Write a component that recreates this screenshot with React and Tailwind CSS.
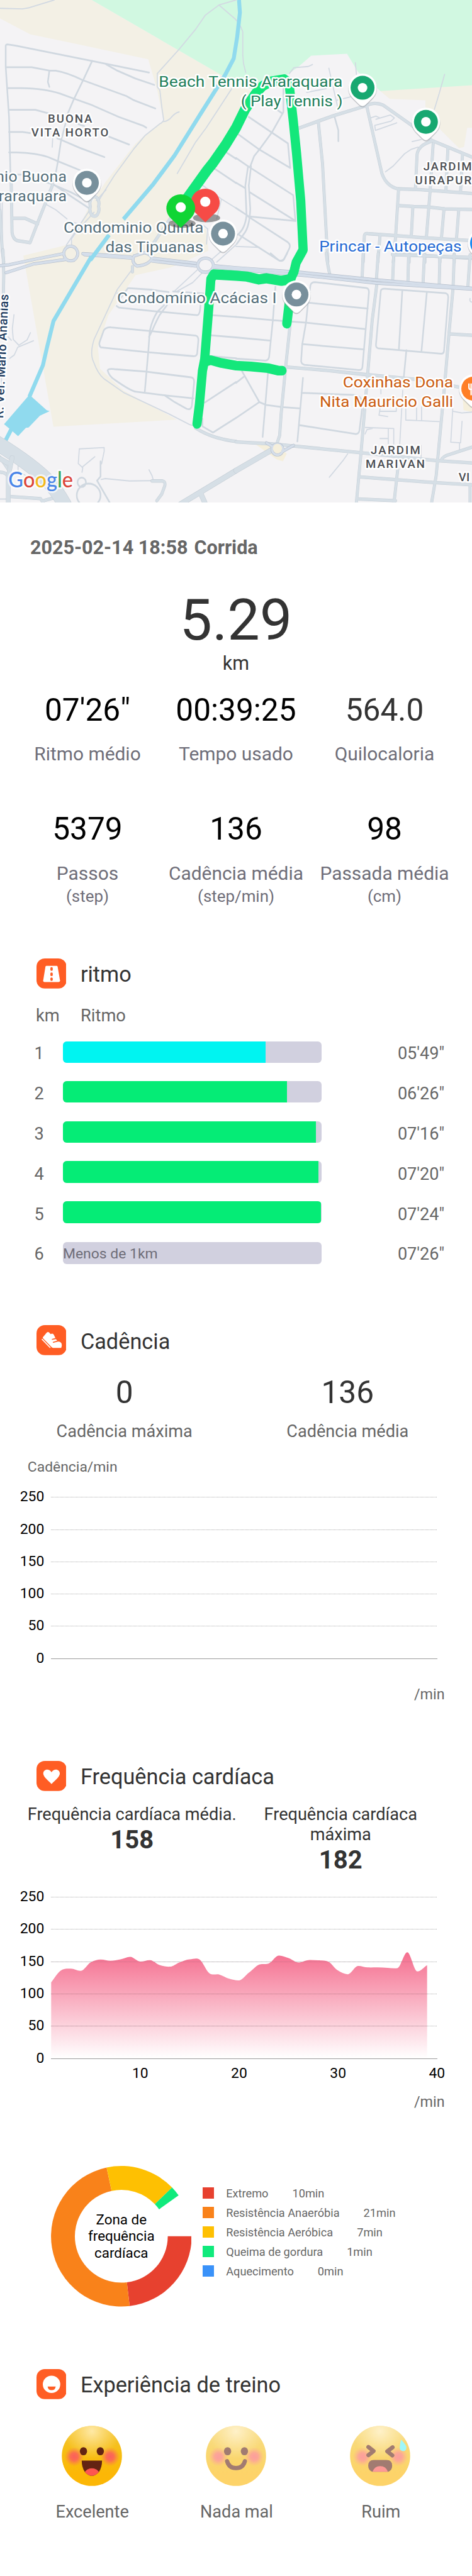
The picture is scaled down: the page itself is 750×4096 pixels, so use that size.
import React from "react";

/* ---------- map ---------- */

const TILES = [
  {
    x: 0,
    y: 0,
    thin: [
      "M0 50 L150 53 L195 46 L360 0",
      "M1045 440 L1190 295 L1300 175 L1365 90 L1455 30 L1568 0",
      "M1455 30 L1568 118",
      "M1045 440 V520 L1062 540 L1075 640 L1087 715 Q1087 730 1060 742 L965 810 L890 890 L760 1050 L690 1150 L650 1210",
      "M1087 728 Q1120 722 1140 700 Q1165 675 1190 670",
      "M1540 530 L1370 765 L1300 850 L1178 1038",
      "M350 830 L347 880",
      "M300 1220 L370 1255 L445 1310",
      "M705 1135 L640 1200 M590 1265 L440 1468 M625 1270 L510 1385 L475 1430 V1470",
      "M470 1325 L520 1340",
      "M0 1180 L8 1400 M15 1200 V1420",
      "M1340 1105 L1470 1190 L1568 1245 M1470 1195 L1440 1310 M1340 1340 L1380 1370 L1372 1460",
      "M1568 1465 L1440 1568 M1500 1480 L1410 1550",
    ],
    minor: [
      "M70 1060 L60 700 L38 400 V275 Q38 266 50 266 L100 272 L610 365 L990 434",
      "M705 385 L780 423 L900 470 L1025 508",
      "M40 402 H210 L330 423 H370 Q450 435 550 480 L840 575 L890 600 L1032 649",
      "M328 423 L318 490 L328 520",
      "M50 527 H140 Q300 530 400 560 L490 590 L600 625 L790 700 L950 752 L972 764",
      "M60 657 H235 L320 678 M520 742 L560 755",
      "M60 790 H150 L200 796 M725 818 L858 865",
      "M60 912 H110 Q240 915 320 940 L385 965 L530 1018",
      "M380 828 L410 838 L530 885 L694 940",
      "M612 365 L555 475 L490 595 L450 680 M435 740 L405 845 L385 965 L368 1050 L345 1110",
      "M70 1045 H150 L340 1100 L470 1150 L595 1210 M350 1100 L480 1180 L590 1245",
      "M1500 910 L1568 950 M1430 1012 L1568 1095",
    ],
    medium: [
      "M74 1060 L80 1390 Q85 1430 115 1440 L200 1452 L245 1345 L300 1220 L350 1105",
      "M85 1306 H165 L250 1340",
      "M0 1260 L15 1500 L25 1568",
      "M655 1235 A30 42 0 1 1 600 1235 A30 42 0 1 1 655 1235",
      "M1130 1310 L1020 1455",
    ],
    major: [],
  },
  {
    x: 1568,
    y: 0,
    thin: [
      "M0 120 Q20 130 45 190 V330 L50 380 L65 435",
      "M355 440 L385 405 L480 398 L508 386",
      "M793 375 L800 445 M617 408 L640 500 L675 640",
      "M470 553 L600 530 M670 600 L760 580",
      "M1386 445 L1350 560 L1318 655",
      "M895 705 L930 695 L955 706 M930 714 L1025 688 L1052 706 L1030 725 L922 750 L926 780 L1068 735",
      "M993 1028 L1045 993 L1120 920 L1165 893 L1210 880",
      "M1170 847 L1230 835",
      "M0 1475 L155 1480",
    ],
    minor: [
      "M315 530 V670 L238 793 L155 895 L120 935 L95 995 M270 655 L310 680",
      "M85 700 L238 793 L345 858 L360 1005 L155 895 L10 800",
      "M0 945 L80 995 L380 1168 L395 1322 L85 1295 L0 1245",
      "M0 1093 L60 1125 M90 1150 L395 1322",
      "M80 995 L62 1110 L70 1290 Q60 1370 10 1405 M100 995 L85 1110 L95 1250 Q90 1350 60 1390 L5 1460",
      "M80 1295 L345 1450 Q365 1465 355 1485 L320 1550 Q300 1568 280 1555 L20 1405",
      "M655 700 L680 780 V845",
    ],
    medium: [
      "M415 768 L550 724 L650 692 L860 634 Q920 605 980 630 L1160 745 L1300 840 L1568 940",
      "M547 730 L575 980 L600 1400 L610 1568",
      "M870 640 L970 1040 Q1000 1115 1075 1130 L1230 1135 L1568 1158",
      "M1300 845 Q1210 870 1203 925 L1192 1130",
      "M1310 860 L1290 1140 L1265 1420 M1408 885 L1395 1140 M1505 925 L1492 1145",
      "M1080 1135 L1060 1420 L1045 1568",
      "M1080 1230 L1180 1236 L1270 1238 L1385 1250 L1568 1254",
      "M1175 1240 L1165 1410 M1382 1250 L1365 1425 M1480 1255 L1465 1430",
      "M845 1568 L853 1410 Q855 1395 875 1398 L1060 1410 L1270 1424 L1568 1440",
      "M957 1410 L942 1568 M1150 1520 V1568 M1255 1520 V1568 M1355 1520 V1568 M1450 1520 V1568",
      "M1040 1520 L1568 1545",
    ],
    major: [],
  },
  {
    x: 0,
    y: 1516,
    thin: [
      "M875 100 L780 215 L625 515 Q595 600 622 650 Q650 720 690 750 L825 835 L1120 960 L1260 1025 L1300 1035",
      "M93 367 L82 450 L88 515 L125 550 L180 518 L202 475 M55 500 L75 520 M222 523 L118 562 L95 608 L65 628",
      "M1310 100 L1160 225 M1345 115 L1280 175 L1180 225",
      "M545 1310 L550 1283 L520 1258 L527 1170 L692 1162 V1185 L675 1260 M545 1280 L630 1217",
      "M672 1353 L700 1348 L860 1362 L1015 1360 M990 1295 L1010 1330 L1020 1360",
      "M0 1470 H40 M120 1260 V1300 L170 1330 M10 740 V800",
    ],
    minor: [
      "M800 270 L850 208 L1000 217 L1120 232",
      "M775 315 L790 325 L1045 348 L1310 370 Q1330 368 1332 310",
      "M1090 310 L1045 350 Q1010 400 995 465 L985 590 L962 828 M1110 310 L1060 370 Q1030 420 1010 465 L990 500",
      "M700 450 Q720 440 740 443 L1000 465 L1300 492 Q1318 495 1318 520 L1310 600 Q1305 618 1280 615 L985 592 L670 563 Q655 550 662 530 L690 460 Z",
      "M720 695 Q730 690 760 693 L970 708 L1270 742 Q1290 745 1290 770 L1275 910 Q1270 940 1240 930 L1160 890 L1095 850",
      "M715 700 Q725 735 760 755 Q870 825 905 828 L1095 850 L1285 868",
      "M1405 370 L1568 380 M1400 490 L1568 503 M1390 615 L1568 628",
      "M1360 893 L1568 770 M1345 990 V1035 L1415 1072 L1568 985",
      "M668 1245 V1335 L645 1360 L728 1490",
      "M515 1370 A28 28 0 1 1 571 1370 A28 28 0 1 1 515 1370",
      "M510 1448 A79 70 0 1 1 668 1448 A79 70 0 1 1 510 1448",
      "M780 240 L830 232 M1150 228 L1350 240",
    ],
    medium: [
      "M1300 1045 Q1410 1110 1568 1125",
      "M1010 1362 H1080 Q1100 1365 1095 1390 L1075 1440 L1042 1480",
      "M20 -20 L25 130 L22 250",
      "M0 1310 Q50 1310 60 1350 M0 1220 L60 1300",
      "M60 1455 L270 1468 L285 1490 M290 1480 L360 1462",
      "M880 80 V110",
    ],
    major: ["M1200 1500 L1330 1430 L1568 1300 M1330 1430 L1360 1490"],
  },
  {
    x: 1568,
    y: 1516,
    thin: [
      "M742 1200 L715 1235 L620 1340",
      "M963 815 V840 M957 945 H1065 V925 M957 930 L950 968 L1008 977",
      "M1128 925 V998 L1200 1000 L1350 1007 M1200 925 V1000 M1233 920 V1000",
      "M860 1042 L1048 1048 V1140 M1012 1050 V1140 M957 1108 H1010 M858 1080 L870 1055 L905 1048",
      "M1440 930 L1427 1130 L1492 1134 L1502 1005 M1485 1135 V1180 M1440 945 L1500 955 L1568 950",
      "M1230 1150 V1220 M1555 270 Q1550 290 1568 292",
      "M1108 820 L1088 1140",
    ],
    minor: [
      "M230 0 L285 42 Q300 50 315 40 L340 0",
      "M0 380 L245 400 L470 415 L855 453 M0 503 L230 522 M0 630 L195 642 Q215 640 220 620 L245 400 L262 200",
      "M495 190 Q500 172 525 172 L865 207 Q885 210 883 235 L840 680 Q838 700 815 698 L455 667 Q430 660 433 640 L440 545 L465 415 L478 300 Z",
      "M475 295 L875 330 M440 543 L850 575",
      "M962 225 Q965 210 990 212 L1390 238 Q1412 242 1410 265 L1382 585 Q1380 602 1360 600 L945 568 Q928 565 930 545 Z",
      "M1105 220 L1082 578 M1268 232 L1232 588",
      "M1132 580 L1115 740",
      "M445 745 L408 1125 M435 835 L780 847 Q840 850 835 900",
      "M838 930 L820 1060 Q815 1085 790 1080 L420 1028",
      "M40 705 L155 890 L200 907 L310 920 L425 928 M0 985 L155 890 M0 775 L50 740",
      "M213 710 L177 1098",
    ],
    medium: [
      "M358 440 L330 680 L300 960 L290 1090 L275 1130",
      "M335 680 L600 700 L870 726 L1200 755 L1480 800",
      "M935 190 L905 400 L875 720 L845 1040 L830 1200 L800 1490",
      "M1442 210 L1415 480 L1385 800 L1360 1040 L1330 1330 L1300 1490",
      "M0 1128 L230 1140 L350 1150 L830 1193 L1330 1240 L1568 1254",
      "M1075 1290 L1050 1490 M825 1338 L1320 1372 L1568 1385 M1555 1385 V1490 M810 1470 L1060 1480",
      "M1365 1235 Q1370 1215 1430 1200 L1568 1160",
      "M600 0 Q605 60 628 145 M845 0 L838 150 M945 0 L932 170 M1048 10 L1040 180 M1147 10 L1142 180 M1252 10 L1242 190 M1355 10 L1350 195 M1450 10 L1442 210 M1555 10 L1540 210",
      "M1415 482 L1568 490",
      "M1040 8 L1568 25",
    ],
    major: ["M0 1300 L240 1175"],
  },
];

const HIGHWAYS = [
  "M0 1590 L60 1584 L240 1550 L420 1518 M40 1632 L220 1580 L440 1552",
  "M550 1518 L700 1526 L870 1538 M560 1524 L880 1545",
  "M1010 1545 L1300 1575 M1010 1562 L1300 1592",
  "M1420 1590 L1568 1602 L2000 1630 L2500 1675 L3136 1725",
  "M1425 1600 L1568 1612 L2000 1646 L2500 1694 L3136 1730",
  "M470 1473 A46 44 0 1 0 470.1 1473",
  "M890 1532 L960 1512 Q1000 1520 1010 1545 Q990 1585 910 1592 Q870 1570 890 1532",
  "M1365 1545 A52 42 0 1 0 1366 1545",
  "M1843 2658 A36 32 0 1 0 1844 2658",
  "M1770 2650 L1815 2675 M1950 2665 L1870 2705",
];

function Roads({ paths, edge, core, outer, inner }) {
  return (
    <>
      {paths.map((d, i) => (
        <path key={"o" + i} d={d} stroke={edge} strokeWidth={outer} />
      ))}
      {paths.map((d, i) => (
        <path key={"i" + i} d={d} stroke={core} strokeWidth={inner} />
      ))}
    </>
  );
}

function Pin({ x, y, color, children }) {
  return (
    <g transform={`translate(${x} ${y})`}>
      <path
        d="M0 43 Q-4 43 -8 39 L-24 23 A33 33 0 1 1 24 23 L8 39 Q4 43 0 43Z"
        fill="#8a8f94"
        opacity=".45"
        transform="translate(0 2)"
      />
      <path d="M0 42 Q-4 42 -8 38 L-24 22 A32.5 32.5 0 1 1 24 22 L8 38 Q4 42 0 42Z" fill="#fff" />
      <circle r="27.4" fill={color} />
      {children || <circle r="11" fill="#fff" />}
    </g>
  );
}

function Flag({ x, y, color }) {
  return (
    <g transform={`translate(${x} ${y})`}>
      <ellipse cx="3" cy="34" rx="31" ry="10" fill="#4b4b4b" opacity=".55" />
      <path d="M0 44 L-22 23 A33 32 0 1 1 22 23Z" fill={color} />
      <circle cy="-3" r="11.6" fill="#fff" />
    </g>
  );
}

const LABELS = [
  { t: "Beach Tennis Araraquara", x: 363.3, y: 198.2, w: 420.5, c: "#1f7f5c" },
  { t: "( Play Tennis )", x: 551, y: 243.4, w: 233, c: "#1f7f5c" },
  { t: "Condominio Quinta", x: 145.3, y: 532.7, w: 320.3, c: "#546e7a" },
  { t: "das Tipuanas", x: 241, y: 577.9, w: 224.6, c: "#546e7a" },
  { t: "Condomínio Acácias I", x: 267.9, y: 693.7, w: 365, c: "#546e7a" },
  { t: "Princar - Autopeças", x: 730.4, y: 576.7, w: 326, c: "#2469d4" },
  { t: "Coxinhas Dona", x: 784.5, y: 887.3, w: 252.5, c: "#cb5c10" },
  { t: "Nita Mauricio Galli", x: 731.5, y: 932.5, w: 305.5, c: "#cb5c10" },
];

const AREAS = [
  { t: "BUONA", x: 109.5, y: 281.3, w: 101.2 },
  { t: "VITA HORTO", x: 71.6, y: 312.7, w: 176.4 },
  { t: "JARDIM", x: 968.7, y: 390.4, w: 110.8 },
  { t: "UIRAPUR", x: 949.8, y: 421.7, w: 129 },
  { t: "JARDIM", x: 848.2, y: 1040, w: 113.6 },
  { t: "MARIVAN", x: 836.8, y: 1072, w: 135.2 },
  { t: "VI", x: 1049.6, y: 1101.6, w: 25 },
];

function RunMap() {
  return (
    <div className="relative h-[798.5px] w-full overflow-hidden bg-[#f4f3f5]">
      <svg
        className="block h-full w-full"
        viewBox="0 0 3136 3005"
        preserveAspectRatio="none"
        fill="none"
        strokeLinecap="round"
        strokeLinejoin="round"
      >
        <path
          fill="#f3f0e5"
          d="M0 0 H610 L1568 500 L1700 560 L1568 760 L1180 1330 L1370 1370 L1385 1500 L1250 1556 L1130 1601 L900 1646 L720 1886 L650 2076 L665 2206 L820 2336 L940 2396 L1175 2511 L355 2553 L155 1530 L470 1460 L590 1240 L700 1090 L900 860 L960 810 L1085 720 L1045 540 L985 355 L500 262 L200 205 L0 110Z"
        />
        <path fill="#f3f0e5" d="M2520 540 L3136 500 V765 H3104 L3083 880 L3050 886 L2930 780 L2826 640 V600 L2590 592Z" />
        <path fill="#d1f8e1" d="M610 0 H3136 V510 L2528 545 L2378 430 L2306 322 L2068 333 L1988 395 L1920 440 L1700 545 L1568 500Z" />
        <path fill="#f5efdc" d="M1700 2660 H1840 L1905 2715 L1880 2760 L1840 2750Z M3075 2390 L3136 2380 V2465 L3080 2455Z" />

        {TILES.map((t, i) => (
          <g key={i} transform={`translate(${t.x} ${t.y})`}>
            {t.thin.map((d, k) => (
              <path key={k} d={d} stroke="#d2d9e2" strokeWidth="7" />
            ))}
            {t.minor.map((d, k) => (
              <path key={k} d={d} stroke="#d0d8e0" strokeWidth="10.5" />
            ))}
          </g>
        ))}
        {TILES.map((t, i) => (
          <g key={i} transform={`translate(${t.x} ${t.y})`}>
            <Roads paths={t.medium} edge="#c5ced6" core="#d6dfe6" outer={20} inner={16} />
            <Roads paths={t.major} edge="#c5ced6" core="#d6dfe6" outer={34} inner={29} />
          </g>
        ))}
        <Roads paths={HIGHWAYS} edge="#b4bdca" core="#d5deea" outer={19} inner={14} />
        <path d="M1843 2656 A30 28 0 1 0 1844 2656" fill="#f5efdc" />

        <g stroke="#90daee" strokeWidth="26" strokeLinecap="butt">
          <path d="M1588 0 L1594 75 L1576 220 L1553 350 L1495 450 L1330 685 L1160 930 L1020 1100 L820 1312 M725 1405 L600 1556" />
          <path d="M608 1535 L500 1700 L355 1922 L312 2080 L285 2186 L195 2375 M80 2560 L40 2630 L-10 2710" />
        </g>
        <path
          fill="#90daee"
          d="M188 2370 H205 L310 2455 L330 2460 L265 2488 L190 2558 L172 2560 L120 2610 L82 2580 L27 2538Z"
        />

        <path d="M-40 2640 Q230 2790 330 2890 Q380 2940 430 3020" stroke="#c5ced6" strokeWidth="92" />
        <path d="M-40 2640 Q230 2790 330 2890 Q380 2940 430 3020" stroke="#d6dfe6" strokeWidth="87" />
        <path d="M-10 2740 L50 2770 M80 2740 L55 2850 V3020" stroke="#c5ced6" strokeWidth="31" />
        <path d="M-10 2740 L50 2770 M80 2740 L55 2850 V3020" stroke="#d6dfe6" strokeWidth="27" />

        <g stroke="#14e77b" strokeWidth="61">
          <path
            strokeWidth="66"
            d="M1220 1215 L1375 1020 L1415 975 L1500 865 L1568 765 L1628 655 L1700 560"
          />
          <path d="M1690 570 L1745 515 L1800 488 L1888 475 L1920 495 L1948 720 L1970 915 L1998 1200 L2014 1495 L1968 1570 L1953 1626 L1930 1670 L1870 1680 L1770 1665 L1720 1672 L1640 1655 L1568 1650 L1420 1642 L1401 1670 L1388 1830 L1360 2150 L1345 2220 L1325 2420 L1309 2535" />
          <path strokeWidth="58" d="M1362 2165 L1400 2155 L1470 2172 L1568 2188 L1668 2193 L1780 2203 L1850 2218 L1875 2218" />
          <path strokeWidth="62" d="M1932 1670 L1925 1790 L1917 1850 L1906 1935" />
        </g>
      </svg>

      <svg className="absolute inset-0 h-full w-full font-['Roboto',sans-serif]" viewBox="0 0 1080 1150" fill="none">
        <Pin x={198.7} y={418.7} color="#78909c" />
        <Pin x={510.3} y={535} color="#78909c" />
        <Pin x={829.6} y={201} color="#18a871" />
        <Pin x={974.6} y={279} color="#18a871" />
        <Pin x={1103} y={557} color="#1b8cf0" />
        <g stroke="#fff" strokeWidth="7" strokeLinejoin="round" paintOrder="stroke" fontSize="35.6">
          {LABELS.map((l) => (
            <text
              key={l.t}
              x={l.x}
              y={l.y}
              textLength={l.w}
              lengthAdjust="spacingAndGlyphs"
              fill={l.c}
              style={{ paintOrder: "stroke" }}
            >
              {l.t}
            </text>
          ))}
          <text x="153" y="416" textAnchor="end" fill="#546e7a" letterSpacing=".5" style={{ paintOrder: "stroke" }}>
            nio Buona
          </text>
          <text x="153" y="461" textAnchor="end" fill="#546e7a" letterSpacing=".5" style={{ paintOrder: "stroke" }}>
            raraquara
          </text>
          <g fontSize="26.8" fontWeight="500" fill="#4b4e53">
            {AREAS.map((l, i) => (
              <text key={i} x={l.x} y={l.y} textLength={l.w} style={{ paintOrder: "stroke" }}>
                {l.t}
              </text>
            ))}
          </g>
          <text
            transform="translate(7 958) rotate(-87.5)"
            textLength="284"
            fontSize="28.5"
            fontWeight="500"
            fill="#1c3a5e"
            style={{ paintOrder: "stroke" }}
          >
            R. Ver. Mario Ananias
          </text>
        </g>
        <Pin x={678.4} y={674.5} color="#78909c" />
        <Pin x={1083} y={890} color="#ff7f27">
          <path d="M-10 -12 V-3 Q-10 2 -5 2 Q0 2 0 -3 V-12 M-5 -12 V15 M9 15 V-13 Q3 -8 4 2 H9" stroke="#fff" strokeWidth="3.2" />
        </Pin>
        <Flag x={469.7} y={465} color="#f64b46" />
        <Flag x={413.6} y={477.7} color="#10d535" />
        <text
          x="19"
          y="1115.8"
          textLength="148"
          lengthAdjust="spacingAndGlyphs"
          fontSize="49"
          fontWeight="500"
          className="font-['Lato',sans-serif]"
          stroke="#fff"
          strokeOpacity=".7"
          strokeWidth="8"
          strokeLinejoin="round"
          style={{ paintOrder: "stroke" }}
        >
          <tspan fill="#4a86e8">G</tspan>
          <tspan fill="#db4539">o</tspan>
          <tspan fill="#f4b81c">o</tspan>
          <tspan fill="#4a86e8">g</tspan>
          <tspan fill="#3aa557">l</tspan>
          <tspan fill="#db4539">e</tspan>
        </text>
      </svg>
    </div>
  );
}

/* ---------- section header ---------- */

function RoadIcon() {
  return (
    <>
      <path d="M23 17 H46 Q48 17 48.5 19 L54 51 Q54 54 51 54 H18 Q15 54 15.3 51 L20.5 19 Q21 17 23 17Z" fill="#fff" />
      <g fill="#ff5d24">
        <rect x="31.8" y="20" width="5.5" height="8.5" rx="2.7" />
        <rect x="31.8" y="32" width="5.5" height="8.5" rx="2.7" />
        <rect x="31.8" y="43.5" width="5.5" height="8" rx="2.7" />
      </g>
    </>
  );
}

function ShoeIcon() {
  return (
    <g transform="translate(-13 -12) scale(.3333)" fill="#fff">
      <path d="M83 119 L110 87 Q117 80 125 86 L136 98 L147 94 Q154 94 158 102 L169 125 L146 131 Q142 134 146 138 L173 132 L181 143 L154 151 Q149 154 153 158 L186 150 Q205 147 212 165 Q216 180 209 193 H153 Q147 193 143 188 L84 127 Q81 123 83 119Z" />
      <path d="M78 134 L132 190" stroke="#fff" strokeWidth="7" strokeLinecap="round" />
    </g>
  );
}

function HeartIcon() {
  return (
    <path
      d="M34.5 53 C28 46 15.5 37 15.5 29 C15.5 19 28.5 16 34.5 26 C40.5 16 53.5 19 53.5 29 C53.5 37 41 46 34.5 53Z"
      fill="#fff"
    />
  );
}

function SmileIcon() {
  return (
    <>
      <circle cx="34.5" cy="35" r="20" fill="#fff" />
      <path d="M25.5 40 H44 Q43 48.5 34.7 48.5 Q26.5 48.5 25.5 40Z" fill="#ff5d24" />
    </>
  );
}

function Header({ icon, title }) {
  return (
    <div className="flex h-[47.8px] items-center pl-[57.6px]">
      <svg className="h-[47.8px] w-[47.8px] shrink-0" viewBox="0 0 69 69" fill="none">
        <rect width="69" height="69" rx="19" fill="#ff5d24" />
        {icon}
      </svg>
      <h2 className="ml-[22.5px] pt-[3px] text-[34.3px] leading-[40px] text-[#333]">{title}</h2>
    </div>
  );
}

/* ---------- summary ---------- */

function StatRow({ items }) {
  return (
    <div className="grid grid-cols-3 px-[21px] text-center">
      {items.map((s) => (
        <div key={s.label} className="flex flex-col whitespace-nowrap">
          <span className={s.dim ? "text-[49.6px] leading-[60px] text-[#333]" : "text-[49.6px] leading-[60px] text-black"}>
            {s.value}
          </span>
          <span className="mt-[20.5px] text-[29.9px] leading-[40px] text-[#6f6e79]">{s.label}</span>
          {s.unit && <span className="text-[25.9px] leading-[32px] text-[#6f6e79]">{s.unit}</span>}
        </div>
      ))}
    </div>
  );
}

/* ---------- pace ---------- */

const PACES = [
  { n: 1, time: "05'49\"", w: 78.4, fill: "bg-[#00f4f1]", pad: "mb-[2.6px]" },
  { n: 2, time: "06'26\"", w: 86.6, fill: "bg-[#05ec76]", pad: "mb-[5px]" },
  { n: 3, time: "07'16\"", w: 97.8, fill: "bg-[#05ec76]", pad: "mb-[5px]" },
  { n: 4, time: "07'20\"", w: 98.7, fill: "bg-[#05ec76]", pad: "mb-[5px]" },
  { n: 5, time: "07'24\"", w: 99.6, fill: "bg-[#05ec76]", pad: "mb-[5px]" },
  { n: 6, time: "07'26\"", w: 0, fill: "bg-[#05ec76]", pad: "mb-[2.6px]", note: "Menos de 1km" },
];

function PaceRow({ p }) {
  return (
    <div className="flex h-[63.9px] items-center pl-[54.4px] pr-[43.8px] text-[27.1px] text-[#666]">
      <span className="w-[45.6px] pt-[1px] leading-[32px]">{p.n}</span>
      <div className={`flex h-[34.4px] w-[411.3px] items-center overflow-hidden rounded-[6px] bg-[#d1d0df] ${p.pad}`}>
        <div className={`h-full ${p.fill}`} style={{ width: p.w + "%" }} />
        {p.note && <span className="pt-[2px] text-[22.9px] leading-[32px] text-[#6e6d78]">{p.note}</span>}
      </div>
      <span className="ml-auto pt-[1px] leading-[32px]">{p.time}</span>
    </div>
  );
}

/* ---------- charts ---------- */

const HEART = [
  117.5, 136, 138.6, 135.2, 148.5, 152.7, 150.8, 153, 156.9, 149.6, 151.9, 144, 141.7, 148.5, 153, 152.7, 131.4, 129.5,
  123, 120.4, 132.5, 144.7, 146.6, 158.8, 155, 148.1, 151.9, 151.5, 149.6, 135.6, 129.9, 142.8, 140.5, 140.5, 139.8,
  139.4, 164, 134.4, 143.9,
];

function areaPath(values, left, step, base, unit) {
  const pts = values.map((v, i) => [left + i * step, base - v * unit]);
  const slope = pts.map((p, i) => {
    const a = pts[i - 1];
    const b = pts[i + 1];
    if (!a || !b) return null;
    const s0 = p[1] - a[1];
    const s1 = b[1] - p[1];
    return s0 * s1 <= 0 ? (s0 + s1) * 0.12 : (s0 + s1) * 0.45;
  });
  slope[0] = pts[1][1] - pts[0][1];
  slope[pts.length - 1] = pts[pts.length - 1][1] - pts[pts.length - 2][1];
  let d = `M${left} ${base} L${pts[0][0]} ${pts[0][1]}`;
  for (let i = 1; i < pts.length; i++) {
    const [x0, y0] = pts[i - 1];
    const [x1, y1] = pts[i];
    d += ` C${x0 + step / 3} ${y0 + slope[i - 1] / 3} ${x1 - step / 3} ${y1 - slope[i] / 3} ${x1} ${y1}`;
  }
  return d + ` V${base}Z`;
}

function Axis({ top, step }) {
  return (
    <>
      {[250, 200, 150, 100, 50, 0].map((v, i) => {
        const y = Math.round(top + i * step) + 0.5;
        return (
          <g key={v}>
            <line
              x1="81.3"
              x2="694.5"
              y1={y}
              y2={y}
              stroke={v ? "#a9a9a9" : "#9c9c9c"}
              strokeDasharray={v ? "1 1" : undefined}
              shapeRendering="crispEdges"
            />
            <text x="70.3" y={y + 6.5} textAnchor="end" fill="#000">
              {v}
            </text>
          </g>
        );
      })}
    </>
  );
}

function CadenceChart() {
  return (
    <svg className="mt-[13.5px] block h-[290px] w-[750px]" viewBox="0 0 750 290" fontSize="22.9">
      <Axis top={20.3} step={51.27} />
    </svg>
  );
}

function HeartChart() {
  return (
    <svg className="mt-[7.9px] block h-[320px] w-[750px]" viewBox="0 0 750 320" fontSize="22.9">
      <defs>
        <linearGradient id="hr" x1="0" y1="0" x2="0" y2="1">
          <stop offset="0" stopColor="#f4688a" />
          <stop offset="1" stopColor="#f4688a" stopOpacity="0" />
        </linearGradient>
      </defs>
      <Axis top={27} step={51.3} />
      <path d={areaPath(HEART, 81.3, 15.72, 283.5, 1.026)} fill="url(#hr)" fillOpacity=".96" />
      {[2, 3, 4].map((i) => (
        <line
          key={i}
          x1="81.3"
          x2="678.8"
          y1={Math.round(27 + i * 51.3) + 0.5}
          y2={Math.round(27 + i * 51.3) + 0.5}
          stroke="#8c6d78"
          strokeOpacity=".4"
          strokeDasharray="1 1"
        />
      ))}
      {[10, 20, 30, 40].map((v) => (
        <text key={v} x={81.3 + (v - 1) * 15.72} y="314.9" textAnchor="middle" fill="#000">
          {v}
        </text>
      ))}
    </svg>
  );
}

/* ---------- heart rate zones ---------- */

const ZONES = [
  { label: "Extremo", min: 10, color: "#e7412f", sw: "bg-[#e7412f]" },
  { label: "Resistência Anaeróbia", min: 21, color: "#f9821a", sw: "bg-[#f9821a]" },
  { label: "Resistência Aeróbica", min: 7, color: "#fec002", sw: "bg-[#fec002]" },
  { label: "Queima de gordura", min: 1, color: "#10ea7c", sw: "bg-[#10ea7c]" },
  { label: "Aquecimento", min: 0, color: "#3a92f9", sw: "bg-[#3a92f9]" },
];

function Donut() {
  let start = 0;
  const R = 111.8;
  const r = 73.8;
  const pt = (rad, deg) => {
    const a = (deg * Math.PI) / 180;
    return `${(rad * Math.cos(a)).toFixed(2)} ${(rad * Math.sin(a)).toFixed(2)}`;
  };
  return (
    <svg className="h-[223.6px] w-[223.6px] shrink-0" viewBox="-111.8 -111.8 223.6 223.6">
      {ZONES.filter((z) => z.min).map((z) => {
        const a = start;
        const b = (start = a + z.min * 8.32);
        const big = b - a > 180 ? 1 : 0;
        return (
          <path
            key={z.label}
            fill={z.color}
            d={`M${pt(R, a)} A${R} ${R} 0 ${big} 1 ${pt(R, b)} L${pt(r, b)} A${r} ${r} 0 ${big} 0 ${pt(r, a)}Z`}
          />
        );
      })}
      <g fontSize="22.4" textAnchor="middle" fill="#000">
        <text y="-19.2">Zona de</text>
        <text y="7.6">frequência</text>
        <text y="33.8">cardíaca</text>
      </g>
    </svg>
  );
}

/* ---------- training feel ---------- */

function Face({ id, faded, children }) {
  return (
    <svg className={faded ? "h-[96px] w-[96px] opacity-60" : "h-[96px] w-[96px]"} viewBox="-208 -208 416 416" fill="none">
      <defs>
        <linearGradient id={id + "b"} x1="0" y1="0" x2="0" y2="1">
          <stop offset="0" stopColor="#f4c83a" />
          <stop offset=".45" stopColor="#f6bd12" />
          <stop offset=".8" stopColor="#fcb706" />
        </linearGradient>
        <radialGradient id={id + "s"} cx="0" cy="-170" r="190" gradientUnits="userSpaceOnUse">
          <stop offset="0" stopColor="#ffe9a6" />
          <stop offset="1" stopColor="#ffe08a" stopOpacity="0" />
        </radialGradient>
        <radialGradient id={id + "c"}>
          <stop offset="0" stopColor="#fb5f5c" />
          <stop offset=".4" stopColor="#fb6359" stopOpacity=".88" />
          <stop offset="1" stopColor="#fb7a4a" stopOpacity="0" />
        </radialGradient>
      </defs>
      <circle r="207" fill={`url(#${id}b)`} />
      <circle r="207" fill={`url(#${id}s)`} />
      <circle cx="-122" cy="6" r="66" fill={`url(#${id}c)`} />
      <circle cx="126" cy="6" r="66" fill={`url(#${id}c)`} />
      {children}
    </svg>
  );
}

const Eyes = () => (
  <g fill="#642413">
    <ellipse cx="-58" cy="-32" rx="25" ry="28" />
    <ellipse cx="58" cy="-32" rx="25" ry="28" />
  </g>
);

const FEELS = [
  {
    label: "Excelente",
    face: (
      <Face id="f1">
        <Eyes />
        <path d="M-70 33 H70 Q70 80 48 112 Q24 138 0 138 Q-24 138 -48 112 Q-70 80 -70 33Z" fill="#642413" />
        <path d="M-49 111 Q-30 86 0 86 Q30 86 49 111 Q24 138 0 138 Q-24 138 -49 111Z" fill="#fd5650" />
      </Face>
    ),
  },
  {
    label: "Nada mal",
    face: (
      <Face id="f2" faded>
        <Eyes />
        <path d="M-61 37 Q-48 84 0 84 Q48 84 61 37" stroke="#642413" strokeWidth="29" strokeLinecap="round" />
      </Face>
    ),
  },
  {
    label: "Ruim",
    face: (
      <Face id="f3" faded>
        <path
          d="M-81 -61 L-45 -33 L-81 -5 M86 -59 L49 -31 L84 -3"
          stroke="#642413"
          strokeWidth="28"
          strokeLinecap="round"
          strokeLinejoin="round"
        />
        <path d="M-42 28 H44 Q83 28 83 68 Q83 98 56 109 H-54 Q-82 98 -82 68 Q-82 28 -42 28Z" fill="#642413" />
        <path d="M-53 109 Q-38 70 0 70 Q40 70 54 109Z" fill="#fd5650" />
        <path d="M144 -112 Q174 -84 181 -62 Q182 -34 158 -33 Q134 -34 135 -58 Q137 -84 144 -112Z" fill="#5ff3f6" />
      </Face>
    ),
  },
];

export default function App() {
  return (
    <main className="flex h-[4096px] w-[750px] flex-col overflow-hidden bg-white font-['Roboto',sans-serif]">
      <RunMap />

      <section className="flex flex-col">
        <p className="mt-[52.5px] flex gap-[10px] pl-[47.9px] text-[30.55px] font-bold leading-[40px] text-[#666]">
          <span>2025-02-14 18:58</span>
          <span>Corrida</span>
        </p>
        <p className="mt-[44.9px] text-center text-[91.7px] leading-[100px] text-[#333]">5.29</p>
        <p className="mt-[1.5px] text-center text-[30.55px] leading-[36px] text-[#333]">km</p>
        <div className="mt-[25.2px]">
          <StatRow
            items={[
              { value: "07'26\"", label: "Ritmo médio" },
              { value: "00:39:25", label: "Tempo usado" },
              { value: "564.0", label: "Quilocaloria", dim: true },
            ]}
          />
        </div>
        <div className="mt-[69px]">
          <StatRow
            items={[
              { value: "5379", label: "Passos", unit: "(step)" },
              { value: "136", label: "Cadência média", unit: "(step/min)" },
              { value: "98", label: "Passada média", unit: "(cm)" },
            ]}
          />
        </div>
      </section>

      <section className="mt-[83.5px] flex flex-col">
        <Header icon={<RoadIcon />} title="ritmo" />
        <div className="mt-[26.7px] mb-[12px] flex pl-[57px] text-[27.3px] leading-[32px] text-[#666]">
          <span className="w-[71px]">km</span>
          <span>Ritmo</span>
        </div>
        {PACES.map((p) => (
          <PaceRow key={p.n} p={p} />
        ))}
      </section>

      <section className="mt-[81.3px] flex flex-col">
        <Header icon={<ShoeIcon />} title="Cadência" />
        <div className="mt-[28.8px] grid grid-cols-2 px-[20.4px] text-center">
          {[
            ["0", "Cadência máxima"],
            ["136", "Cadência média"],
          ].map(([v, l]) => (
            <div key={l} className="flex flex-col">
              <span className="text-[49.6px] leading-[60px] text-[#333]">{v}</span>
              <span className="mt-[14.6px] text-[27.1px] leading-[36px] text-[#666]">{l}</span>
            </div>
          ))}
        </div>
        <p className="mt-[24.6px] pl-[43.8px] text-[22.9px] leading-[28px] text-[#666]">Cadência/min</p>
        <CadenceChart />
        <p className="mt-[30px] pr-[43.5px] text-right text-[23.3px] leading-[28px] text-[#666]">/min</p>
      </section>

      <section className="mt-[91.6px] flex flex-col">
        <Header icon={<HeartIcon />} title="Frequência cardíaca" />
        <div className="mt-[22.1px] grid grid-cols-2 pl-[44px] pr-[43px] text-center text-[27.1px] leading-[31.9px] text-[#333]">
          <div className="flex flex-col items-center">
            <span className="-mx-[10px] whitespace-nowrap">Frequência cardíaca média.</span>
            <strong className="text-[40px] font-bold leading-[47.8px]">158</strong>
          </div>
          <div className="flex flex-col px-[36px]">
            <span>Frequência cardíaca máxima</span>
            <strong className="text-[40px] font-bold leading-[47.8px]">182</strong>
          </div>
        </div>
        <HeartChart />
        <p className="mt-[18.7px] pr-[43.5px] text-right text-[23.3px] leading-[28px] text-[#666]">/min</p>
      </section>

      <section className="mt-[88.1px] flex items-start pl-[80.5px]">
        <Donut />
        <ul className="ml-[17.8px] pt-[27.5px] text-[18.2px] leading-[31px] text-[#666]">
          {ZONES.map((z) => (
            <li key={z.label} className="flex h-[31px] items-center">
              <span className={`h-[18.3px] w-[18.3px] ${z.sw}`} />
              <span className="ml-[19px] pt-[1px]">{z.label}</span>
              <span className="ml-[38px] pt-[1px]">{z.min}min</span>
            </li>
          ))}
        </ul>
      </section>

      <section className="mt-[99.2px] flex flex-col">
        <Header icon={<SmileIcon />} title="Experiência de treino" />
        <div className="mt-[42.5px] grid grid-cols-3 pl-[31px] pr-[31px]">
          {FEELS.map((f) => (
            <div key={f.label} className="flex flex-col items-center">
              {f.face}
              <span className="mt-[25px] pl-[2px] text-[27.1px] leading-[32px] text-[#666]">{f.label}</span>
            </div>
          ))}
        </div>
      </section>
    </main>
  );
}
